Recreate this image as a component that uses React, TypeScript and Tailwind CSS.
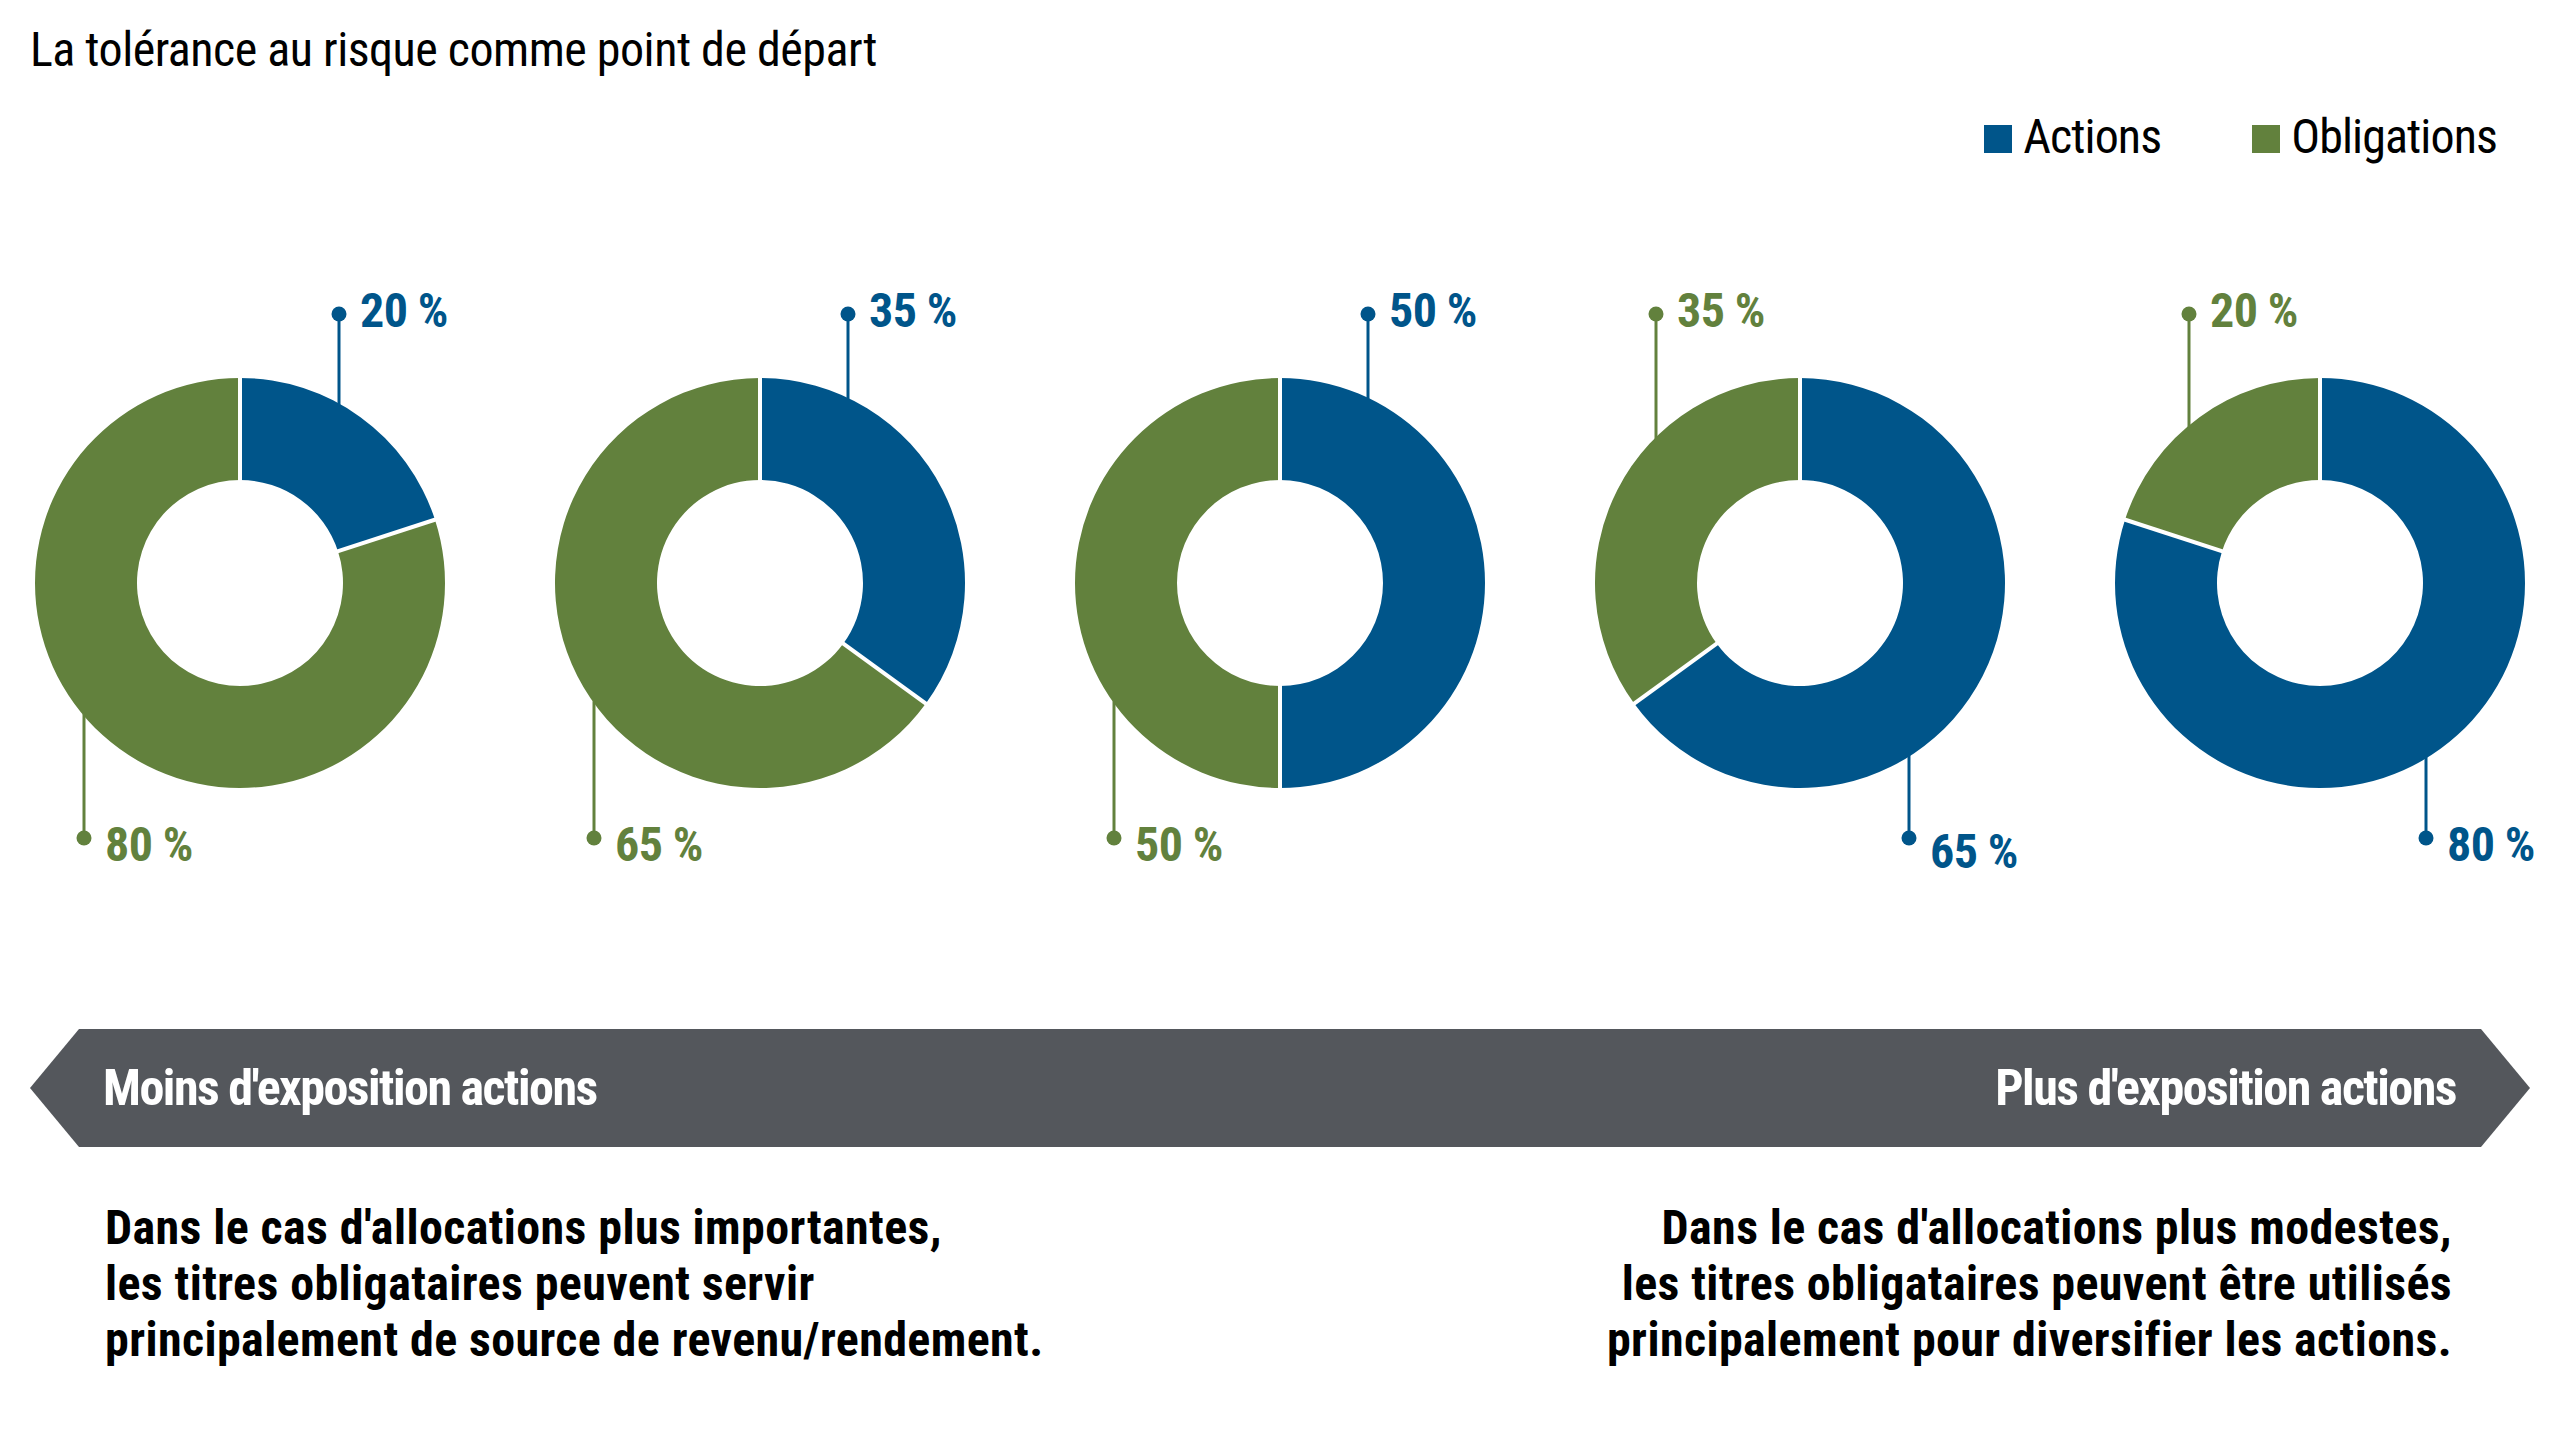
import React from "react";

const BLUE = "#00558a";
const GREEN = "#62813d";

type Lbl = { dx: number; color: string; text: string; base: number };
type D = { pct: number; top: Lbl; bottom: Lbl };

const CX = 260;
const CY = 313;
const RO = 205;
const RI = 103;

const donuts: D[] = [
  { pct: 20, top: { dx: 99, color: BLUE, text: "20 %", base: 57 }, bottom: { dx: -156, color: GREEN, text: "80 %", base: 591 } },
  { pct: 35, top: { dx: 88, color: BLUE, text: "35 %", base: 57 }, bottom: { dx: -166, color: GREEN, text: "65 %", base: 591 } },
  { pct: 50, top: { dx: 88, color: BLUE, text: "50 %", base: 57 }, bottom: { dx: -166, color: GREEN, text: "50 %", base: 591 } },
  { pct: 65, top: { dx: -144, color: GREEN, text: "35 %", base: 57 }, bottom: { dx: 109, color: BLUE, text: "65 %", base: 598 } },
  { pct: 80, top: { dx: -131, color: GREEN, text: "20 %", base: 57 }, bottom: { dx: 106, color: BLUE, text: "80 %", base: 591 } },
];

function pt(a: number, r: number) {
  const rad = (a * Math.PI) / 180;
  return [CX + r * Math.sin(rad), CY - r * Math.cos(rad)];
}

function arc(a0: number, a1: number) {
  const large = a1 - a0 > 180 ? 1 : 0;
  const [x0, y0] = pt(a0, RO);
  const [x1, y1] = pt(a1, RO);
  const [x2, y2] = pt(a1, RI);
  const [x3, y3] = pt(a0, RI);
  return `M ${x0} ${y0} A ${RO} ${RO} 0 ${large} 1 ${x1} ${y1} L ${x2} ${y2} A ${RI} ${RI} 0 ${large} 0 ${x3} ${y3} Z`;
}

function Sep({ a }: { a: number }) {
  const [x0, y0] = pt(a, RI - 3);
  const [x1, y1] = pt(a, RO + 3);
  return <line x1={x0} y1={y0} x2={x1} y2={y1} stroke="#ffffff" strokeWidth={4} />;
}

function Donut({ d }: { d: D }) {
  const b = (d.pct / 100) * 360;
  const topX = CX + d.top.dx;
  const topEdge = CY - Math.sqrt(RO * RO - d.top.dx * d.top.dx);
  const botX = CX + d.bottom.dx;
  const botEdge = CY + Math.sqrt(RO * RO - d.bottom.dx * d.bottom.dx);
  return (
    <svg width={520} height={620} viewBox="0 0 520 620" className="block shrink-0">
      <path d={arc(0, b)} fill={BLUE} />
      <path d={arc(b, 360)} fill={GREEN} />
      <Sep a={0} />
      <Sep a={b} />
      <line x1={topX} y1={44} x2={topX} y2={topEdge + 2} stroke={d.top.color} strokeWidth={3} />
      <circle cx={topX} cy={44} r={7.5} fill={d.top.color} />
      <text x={topX + 21} y={d.top.base} fill={d.top.color} fontSize={48} fontWeight={700} letterSpacing={-0.6}>
        {d.top.text}
      </text>
      <line x1={botX} y1={botEdge - 2} x2={botX} y2={568} stroke={d.bottom.color} strokeWidth={3} />
      <circle cx={botX} cy={568} r={7.5} fill={d.bottom.color} />
      <text x={botX + 21} y={d.bottom.base} fill={d.bottom.color} fontSize={48} fontWeight={700} letterSpacing={-0.6}>
        {d.bottom.text}
      </text>
    </svg>
  );
}

export default function App() {
  return (
    <div className="w-[2560px] h-[1440px] bg-white overflow-hidden flex flex-col font-['Roboto_Condensed','Roboto',sans-serif] font-stretch-condensed text-black">
      <div className="pt-[26px] pl-[30px] text-[48px] leading-none tracking-[-0.5px]">La tolérance au risque comme point de départ</div>

      <div className="mt-[39px] flex justify-end pr-[63px] text-[48px] leading-none tracking-[-0.9px]">
        <div className="flex items-baseline gap-[11px]">
          <span className="w-[28px] h-[28px] bg-[#00558a] inline-block" />
          <span>Actions</span>
        </div>
        <div className="ml-[91px] flex items-baseline gap-[11px]">
          <span className="w-[28px] h-[28px] bg-[#62813d] inline-block" />
          <span>Obligations</span>
        </div>
      </div>

      <div className="mt-[109px] -ml-[20px] flex">
        {donuts.map((d, i) => (
          <Donut key={i} d={d} />
        ))}
      </div>

      <div className="mt-[139px] mx-[30px] h-[118px] bg-[#54575c] flex items-center justify-between pl-[73px] pr-[74px] text-white font-bold text-[50px] leading-none tracking-[-1.5px] [clip-path:polygon(49px_0,calc(100%-49px)_0,100%_50%,calc(100%-49px)_100%,49px_100%,0_50%)]">
        <span>Moins d'exposition actions</span>
        <span>Plus d'exposition actions</span>
      </div>

      <div className="mt-[53px] flex justify-between pl-[105px] pr-[108px] font-bold text-[48px] leading-[56px] tracking-[0.4px]">
        <p>
          Dans le cas d'allocations plus importantes,
          <br />
          les titres obligataires peuvent servir
          <br />
          principalement de source de revenu/rendement.
        </p>
        <p className="text-right">
          Dans le cas d'allocations plus modestes,
          <br />
          les titres obligataires peuvent être utilisés
          <br />
          principalement pour diversifier les actions.
        </p>
      </div>
    </div>
  );
}
